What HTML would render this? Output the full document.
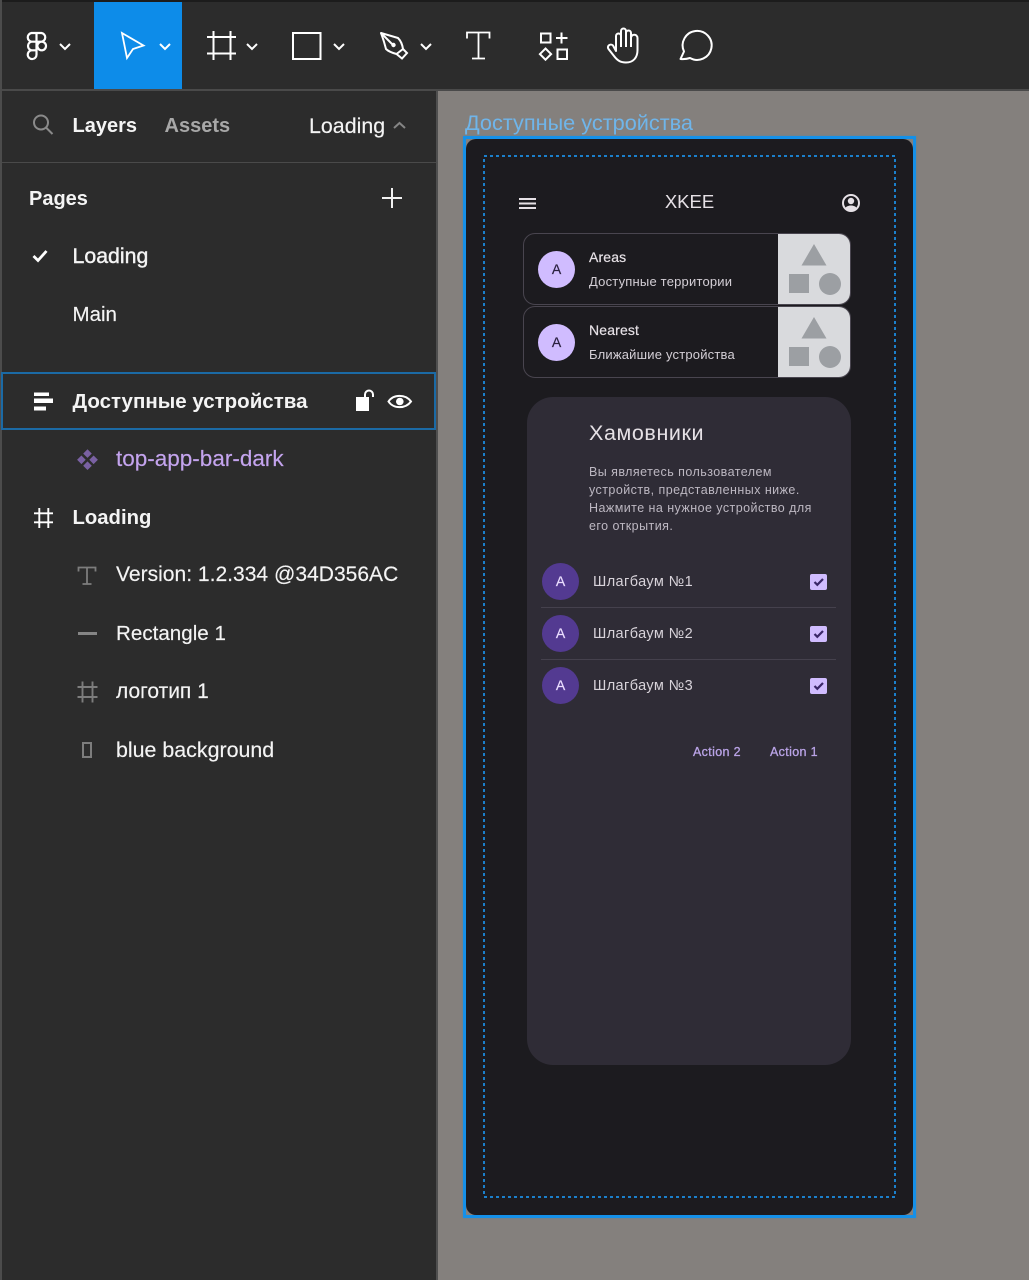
<!DOCTYPE html>
<html lang="ru">
<head>
<meta charset="utf-8">
<title>Figma</title>
<style>
html,body{margin:0;padding:0;background:#84807d}
body{width:1029px;height:1280px;position:relative;overflow:hidden;font-family:"Liberation Sans",sans-serif}
.a{position:absolute}
.t{position:absolute;white-space:nowrap;line-height:24px;height:24px}
.side{font-size:21px;color:#f4f4f4;-webkit-text-stroke:.15px #f4f4f4}
.b{font-weight:700;-webkit-text-stroke:0}
.m{color:#e6e1e6}
svg{position:absolute;overflow:visible}
.ck{position:absolute;left:810px;width:17px;height:16px;background:#d0bcff;border-radius:2px}
.av{position:absolute;border-radius:50%;text-align:center;font-size:14px;line-height:36px;width:36px;height:36px;-webkit-text-stroke:.2px currentColor}
.card{position:absolute;left:523px;width:326px;height:70px;border:1px solid #49454f;border-radius:12px;box-sizing:content-box;overflow:hidden}
.img{position:absolute;right:0;top:0;width:72px;height:70px;background:#d9dadd}
.pg{font-size:12.500px;color:#bdb8c2;letter-spacing:.45px}
.li{font-size:14.500px;color:#d8d3da;letter-spacing:.4px}
.ac{font-size:12.500px;color:#b9a3e6;letter-spacing:.35px;-webkit-text-stroke:.3px #b9a3e6}
.c2{font-size:13px;color:#d4cfd6;letter-spacing:.2px}
.c1{font-size:14px;letter-spacing:.15px;-webkit-text-stroke:.2px #e6e1e6}
</style>
</head>
<body>
<!-- chrome -->
<div class="a" style="left:0;top:0;width:1029px;height:2px;background:#1c1c1c"></div>
<div class="a" style="left:0;top:2px;width:1029px;height:87px;background:#2c2c2c"></div>
<div class="a" style="left:0;top:89px;width:1029px;height:2px;background:#4a4a4a"></div>
<div class="a" style="left:0;top:91px;width:436px;height:1189px;background:#2c2c2c"></div>
<div class="a" style="left:436px;top:91px;width:2px;height:1189px;background:#4f4f4f"></div>
<div class="a" style="left:0;top:0;width:2px;height:1280px;background:#4c4c4c"></div>
<div class="a" style="left:2px;top:162px;width:434px;height:1px;background:#4a4a4a"></div>
<div class="a" style="left:94px;top:2px;width:88px;height:87px;background:#0d8ce9"></div>

<!-- toolbar icons -->
<svg style="left:0;top:0" width="720" height="90" fill="none" stroke="#fff" stroke-width="2">
  <!-- figma logo -->
  <path d="M36.500 33h-5a4.400 4.400 0 0 0 0 8.700h5zM36.500 33h5a4.400 4.400 0 0 1 0 8.700h-5zM36.500 41.700h-5a4.400 4.400 0 0 0 0 8.600h5zM41.700 41.700a4.300 4.300 0 1 1 0 8.600a4.300 4.300 0 0 1 0-8.600zM31.500 50.300h5v4.400a4.400 4.400 0 1 1-5-4.400z" stroke-width="2.200"/>
  <path d="M60 44l5 5 5-5"/>
  <!-- move -->
  <path d="M122 33l21.500 12.500-10.500 3.500-6 9z" stroke-width="1.800"/>
  <path d="M160 44l5 5 5-5"/>
  <!-- frame -->
  <path d="M207 37h29M207 53.500h29M213.500 31v29M230.500 31v29" stroke-width="2"/>
  <path d="M247 44l5 5 5-5"/>
  <!-- rect -->
  <rect x="293" y="33" width="27.500" height="26"/>
  <path d="M334 44l5 5 5-5"/>
  <!-- pen -->
  <path d="M381 33L398 38Q402 42 403 49L396.500 54Q389 52 386 49Q384 41 381 33z" stroke-linejoin="round"/>
  <path d="M403 49l4 4-5 5.500-5.500-4.500"/>
  <path d="M381 33l11 11"/>
  <circle cx="393.500" cy="45" r="2.200" fill="#fff" stroke="none"/>
  <path d="M421 44l5 5 5-5"/>
  <!-- text -->
  <path d="M467 38.500v-6h22.500v6M478.500 32.500v26M472 58.500h13" stroke-width="1.800"/>
  <!-- resources -->
  <rect x="541" y="33.500" width="9.500" height="9"/>
  <rect x="557.500" y="49.500" width="9.500" height="9.500"/>
  <path d="M556 38h11.500M561.500 32.500v11"/>
  <path d="M545.500 48.500l5.600 5.600-5.600 5.600-5.600-5.600z"/>
  <!-- hand -->
  <path d="M616 51V36a2.500 2.500 0 0 1 5 0V31a2.500 2.500 0 0 1 5 0V33a2.500 2.500 0 0 1 5 0V38a3 3 0 0 1 6.500 0V50C637.500 58 633 62.500 626 62.500C620 62.500 617 60 614 56L608.500 49C606.500 46 610.500 43 613 45.500zM621 36V47M626 33V47M631 35V47" stroke-linejoin="round"/>
  <!-- comment -->
  <path d="M680.500 59L684 51.500A14.500 14.500 0 1 1 690 58C687 59 684 59.300 680.500 59z" stroke-linejoin="round"/>
</svg>

<!-- panel header -->
<svg style="left:0;top:0" width="60" height="150" fill="none" stroke="#8a8a8a" stroke-width="2"><circle cx="41" cy="122.500" r="7"/><path d="M46 127.500l6.500 6.500"/></svg>
<div class="t side b" style="left:72.500px;top:114px;font-size:20px">Layers</div>
<div class="t side b" style="left:164.500px;top:114px;font-size:20px;color:#a8a8a8">Assets</div>
<div class="t side" style="left:309px;top:114px;font-size:21.400px">Loading</div>
<svg style="left:390px;top:115px" width="20" height="20" fill="none" stroke="#858585" stroke-width="2"><path d="M4 13l5.500-5 5.500 5"/></svg>

<!-- pages -->
<div class="t side b" style="left:29px;top:187px;font-size:20px">Pages</div>
<svg style="left:380px;top:186px" width="24" height="24" fill="none" stroke="#f2f2f2" stroke-width="2"><path d="M2 12h20M12 2v20"/></svg>
<svg style="left:30px;top:246px" width="20" height="20" fill="none" stroke="#fff" stroke-width="2.800"><path d="M3.500 10l4.500 4.500L16.500 5"/></svg>
<div class="t side" style="left:72.500px;top:244px;font-size:21.300px;-webkit-text-stroke:.4px #f4f4f4">Loading</div>
<div class="t side" style="left:72.500px;top:303px;font-size:20.500px">Main</div>

<!-- selected layer -->
<div class="a" style="left:1px;top:372px;width:435px;height:58px;border:2px solid #1b6aa5;box-sizing:border-box"></div>
<svg style="left:34px;top:392px" width="20" height="20" fill="#fff"><rect x="0" y="0.500" width="15" height="3.500"/><rect x="0" y="6.500" width="19" height="4.500"/><rect x="0" y="14.500" width="12" height="4"/></svg>
<div class="t side b" style="left:72.500px;top:390px;font-size:20.500px">Доступные устройства</div>
<svg style="left:350px;top:388px" width="70" height="26"><rect x="6" y="9" width="13" height="14" fill="#fff"/><path d="M15 9V6.500a4 4 0 0 1 8 0V9" fill="none" stroke="#fff" stroke-width="2"/><path d="M38.500 13.500c5-7.500 17-7.500 22.500 0c-5.500 7.500-17.500 7.500-22.500 0z" fill="none" stroke="#fff" stroke-width="2"/><circle cx="49.800" cy="13.500" r="3.800" fill="#fff"/></svg>

<!-- layers -->
<svg style="left:76px;top:448px" width="24" height="24" fill="#7a61a3"><path d="M11.500 1.300l4.300 4.300-4.300 4.300-4.300-4.300zM5.400 7.500l4.300 4.300-4.300 4.300-4.300-4.300zM17.600 7.500l4.300 4.300-4.300 4.300-4.300-4.300zM11.500 13.400l4.300 4.300-4.300 4.300-4.300-4.300z"/></svg>
<div class="t side" style="left:116px;top:447px;color:#c4a4ee;-webkit-text-stroke:.15px #c4a4ee;font-size:22.500px">top-app-bar-dark</div>

<svg style="left:32px;top:505px" width="24" height="24" fill="none" stroke="#fff" stroke-width="1.900"><path d="M2 8.300h19M2 17.300h19M7.300 3v20M16.300 3v20"/></svg>
<div class="t side b" style="left:72.500px;top:506px;font-size:20.300px">Loading</div>

<svg style="left:76px;top:564px" width="24" height="24" fill="none" stroke="#7d7d7d" stroke-width="1.800"><path d="M2.500 7.500V3.500h17v4M11 3.500v16.500M6.500 20h9"/></svg>
<div class="t side" style="left:116px;top:563px;font-size:21.050px">Version: 1.2.334 @34D356AC</div>

<div class="a" style="left:78px;top:632px;width:19px;height:3px;background:#858585"></div>
<div class="t side" style="left:116px;top:622px;font-size:20.600px">Rectangle 1</div>

<svg style="left:76px;top:680px" width="24" height="24" fill="none" stroke="#7d7d7d" stroke-width="1.900"><path d="M1.500 7h20M1.500 17h20M6.500 1.500v21M16.500 1.500v21"/></svg>
<div class="t side" style="left:116px;top:680px;font-size:21px">логотип 1</div>

<div class="a" style="left:82px;top:742px;width:10px;height:16px;border:2px solid #7d7d7d;box-sizing:border-box"></div>
<div class="t side" style="left:116px;top:738px;font-size:21.400px">blue background</div>

<!-- canvas -->
<div class="t" style="left:465px;top:110.500px;font-size:21.700px;color:#6fb5ea">Доступные устройства</div>
<div class="a" style="left:463px;top:136px;width:453px;height:1082px;background:#1590e8;box-shadow:0 0 2px rgba(21,144,232,.35)"></div>
<div class="a" style="left:466px;top:139px;width:447px;height:1076px;background:#84807d"></div>
<div class="a" style="left:466px;top:139px;width:447px;height:1076px;background:#1c1b1f;border-radius:10px"></div>
<svg style="left:483px;top:155px" width="413" height="1043" fill="none"><rect x="1" y="1" width="411" height="1041" stroke="#1b7fca" stroke-width="2" stroke-dasharray="3 3"/></svg>

<!-- app bar -->
<svg style="left:519px;top:198px" width="18" height="14" fill="#e6e1e6"><rect y="0" width="17" height="2"/><rect y="4.500" width="17" height="2"/><rect y="9" width="17" height="2"/></svg>
<div class="t m" style="left:600px;width:179px;text-align:center;top:190px;font-size:18.500px">XKEE</div>
<svg style="left:842px;top:194px" width="18" height="18"><circle cx="9" cy="9" r="8" fill="none" stroke="#e6e1e6" stroke-width="2"/><circle cx="9" cy="7" r="3.200" fill="#e6e1e6"/><path d="M3.500 13.800c2-3 9-3 11 0-1.500 2-3.500 3-5.500 3s-4-1-5.500-3z" fill="#e6e1e6"/></svg>

<!-- cards -->
<div class="card" style="top:233px"><div class="img"></div></div>
<div class="card" style="top:306px"><div class="img"></div></div>
<svg style="left:778px;top:233px" width="73" height="146" fill="#9c9fa3">
  <path d="M36 11l12.500 21.500h-25z"/><rect x="11" y="41" width="20" height="19"/><circle cx="52" cy="51" r="11"/>
  <path d="M36 84l12.500 21.500h-25z"/><rect x="11" y="114" width="20" height="19"/><circle cx="52" cy="124" r="11"/>
</svg>
<div class="av" style="left:538px;top:251px;background:#d0bcff;color:#2b2140;font-size:14px;width:37px;height:37px;line-height:36px">A</div>
<div class="av" style="left:538px;top:324px;background:#d0bcff;color:#2b2140;font-size:14px;width:37px;height:37px;line-height:36px">A</div>
<div class="t m c1" style="left:589px;top:245px">Areas</div>
<div class="t c2" style="left:589px;top:270px">Доступные территории</div>
<div class="t m c1" style="left:589px;top:318px">Nearest</div>
<div class="t c2" style="left:589px;top:343px">Ближайшие устройства</div>

<!-- dialog -->
<div class="a" style="left:527px;top:397px;width:324px;height:668px;background:#2f2c36;border-radius:26px"></div>
<div class="t" style="left:589px;top:421px;font-size:21.500px;color:#e6e1e6;letter-spacing:.6px">Хамовники</div>
<div class="t pg" style="left:589px;top:459.500px">Вы являетесь пользователем</div>
<div class="t pg" style="left:589px;top:477.500px">устройств, представленных ниже.</div>
<div class="t pg" style="left:589px;top:496px">Нажмите на нужное устройство для</div>
<div class="t pg" style="left:589px;top:514px">его открытия.</div>

<div class="av" style="left:542px;top:563px;width:37px;height:37px;background:#533a91;color:#eaddff">A</div>
<div class="t li" style="left:593px;top:569.500px">Шлагбаум №1</div>
<div class="ck" style="top:574px"></div>
<div class="a" style="left:541px;top:607px;width:295px;height:1px;background:#45414d"></div>

<div class="av" style="left:542px;top:615px;width:37px;height:37px;background:#533a91;color:#eaddff">A</div>
<div class="t li" style="left:593px;top:621.500px">Шлагбаум №2</div>
<div class="ck" style="top:626px"></div>
<div class="a" style="left:541px;top:659px;width:295px;height:1px;background:#45414d"></div>

<div class="av" style="left:542px;top:667px;width:37px;height:37px;background:#533a91;color:#eaddff">A</div>
<div class="t li" style="left:593px;top:673.500px">Шлагбаум №3</div>
<div class="ck" style="top:678px"></div>

<svg style="left:810px;top:574px" width="17" height="121" fill="none" stroke="#3a2768" stroke-width="2.200"><path d="M4.500 8l2.800 2.800L13 5"/><path d="M4.500 60l2.800 2.800L13 57"/><path d="M4.500 112l2.800 2.800L13 109"/></svg>

<div class="t ac" style="left:693px;top:739.500px">Action 2</div>
<div class="t ac" style="left:770px;top:739.500px">Action 1</div>
</body>
</html>
